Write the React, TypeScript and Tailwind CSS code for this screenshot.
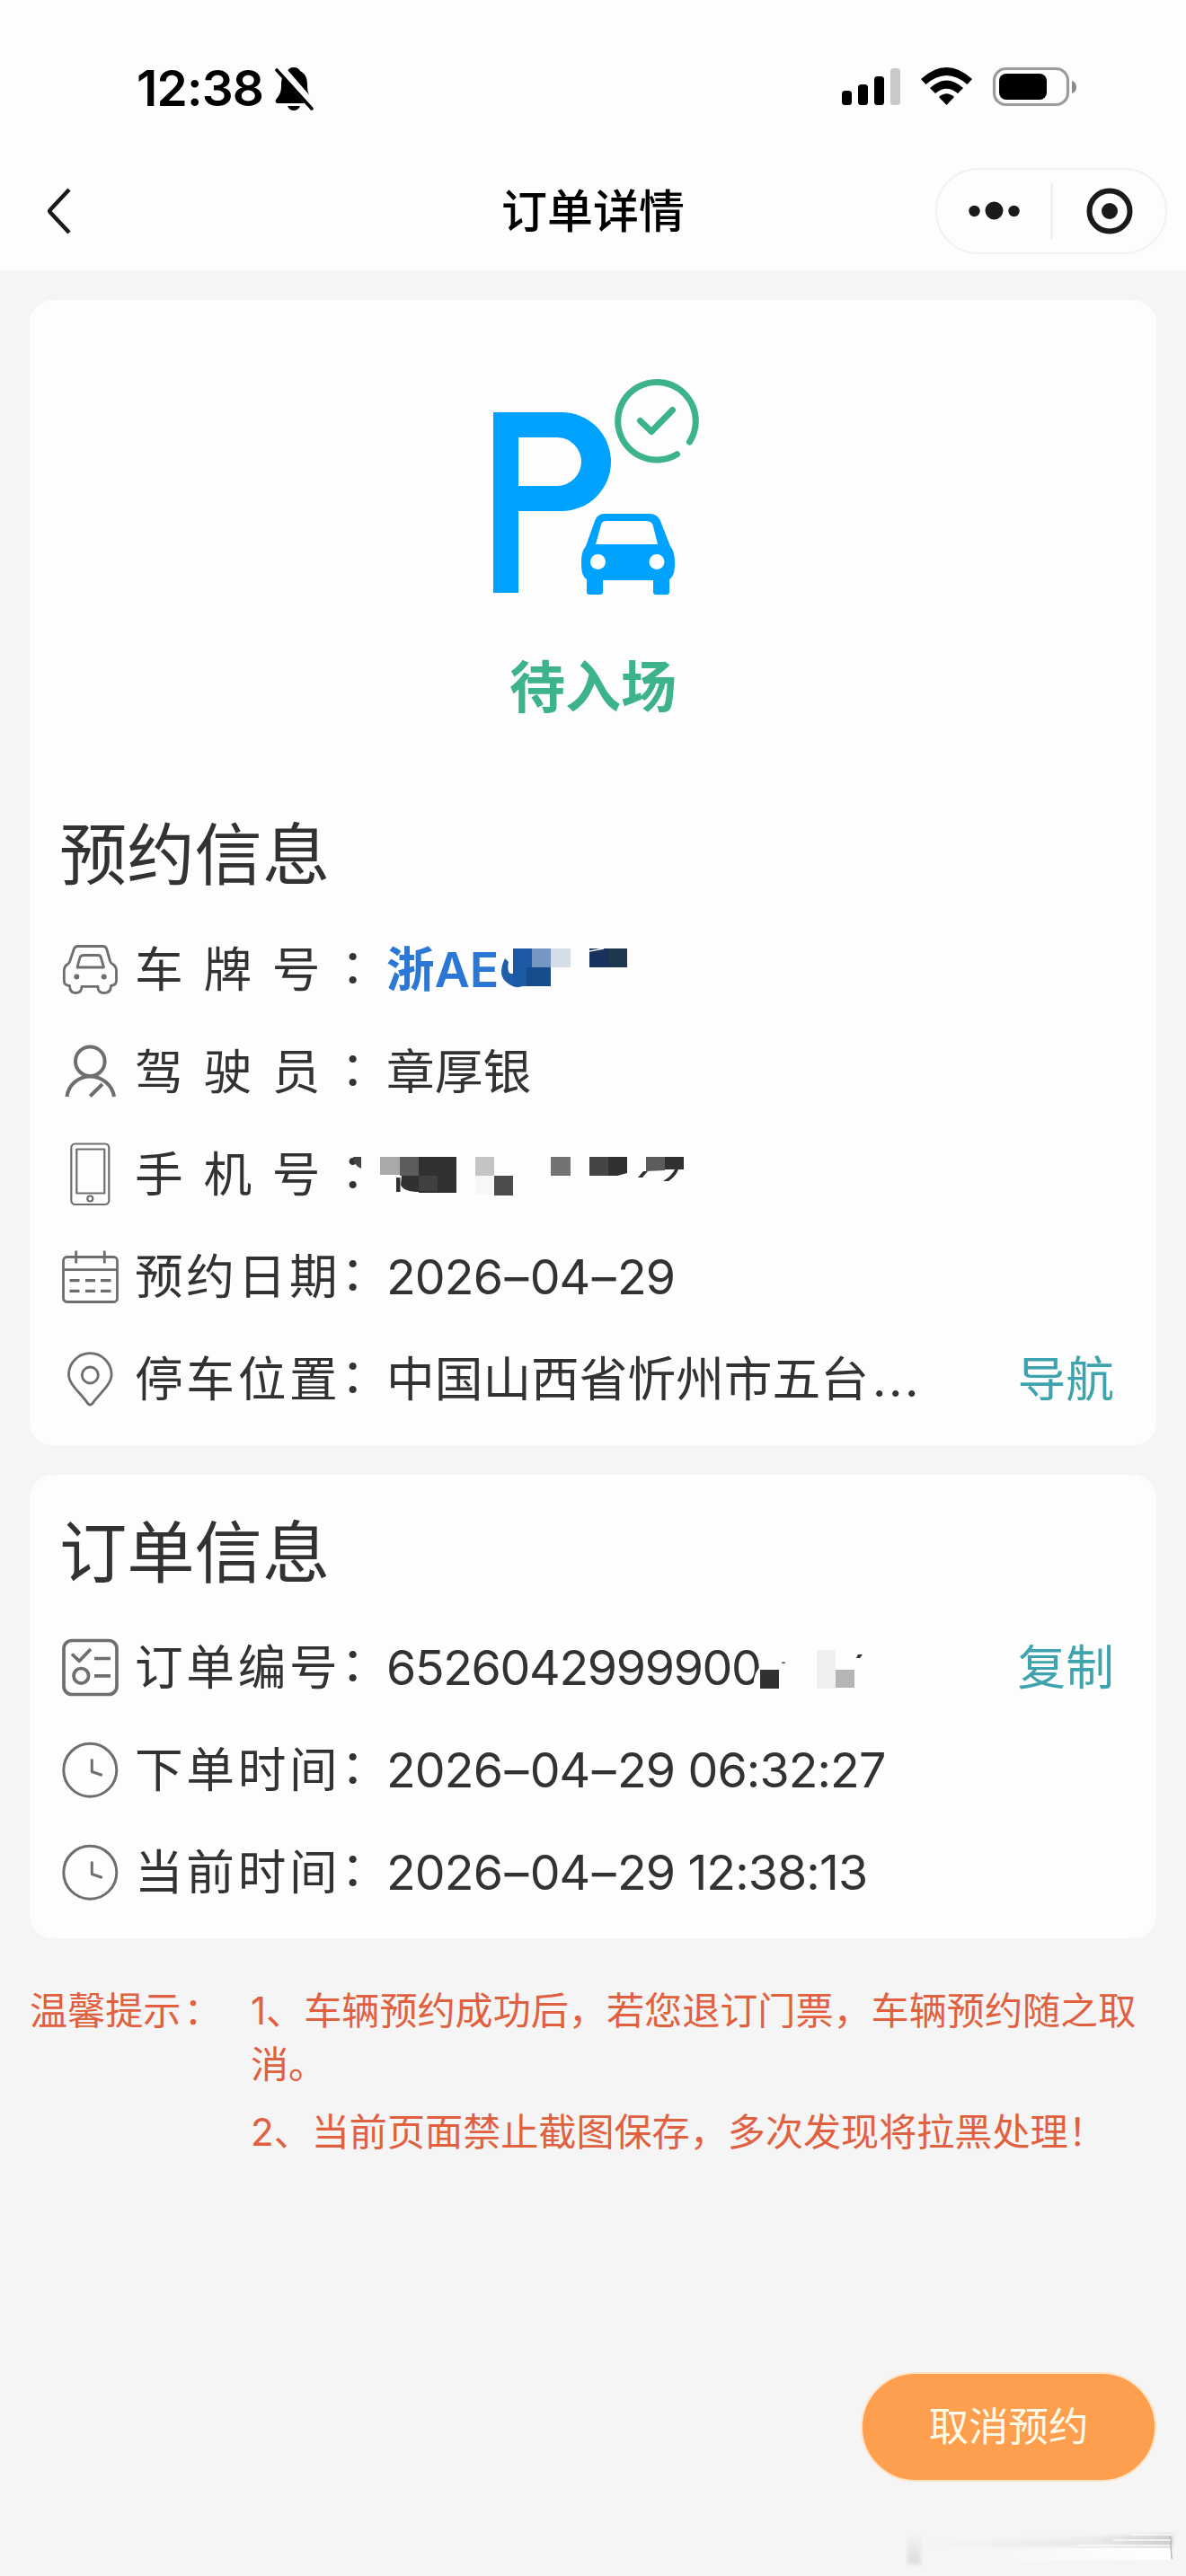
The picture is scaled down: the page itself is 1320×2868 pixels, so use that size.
import type { ReactNode } from "react";

type RowProps = {
  icon: ReactNode;
  label: string;
  action?: string;
  children: ReactNode;
};

export default function App() {
  return (
    <div className="flex h-[2868px] w-[1320px] flex-col overflow-hidden bg-[#f5f5f5] font-['Inter','Noto_Sans_CJK_SC',sans-serif] text-[#323232]">
      <header className="h-[301px] shrink-0 bg-[#fdfdfd] text-black">
        <StatusBar />
        <NavBar />
      </header>

      <main className="flex flex-1 flex-col px-[33px] pt-[33px]">
        <section className="h-[1275px] shrink-0 rounded-[26px] bg-[#fdfdfd]">
          <div className="flex h-[548px] flex-col items-center pt-[82px]">
            <ParkingLogo />
            <p className="mt-[58px] text-[62px] leading-[88px] font-bold text-[#3cb38a]">待入场</p>
          </div>
          <h2 className="flex h-[141px] items-center pl-[33px] text-[75.3px] font-normal">
            预约信息
          </h2>
          <Row icon={<CarIcon />} label="车牌号">
            <span className="font-semibold text-[#2b77d6]">浙AE</span>
            <PlateMask />
          </Row>
          <Row icon={<DriverIcon />} label="驾驶员">
            章厚银
          </Row>
          <Row icon={<PhoneIcon />} label="手机号">
            <PhoneMask />
          </Row>
          <Row icon={<CalendarIcon />} label="预约日期">
            <DateText value="2026–04–29" />
          </Row>
          <Row icon={<PinIcon />} label="停车位置" action="导航">
            中国山西省忻州市五台<span className="ml-1 tracking-[2.6px]">...</span>
          </Row>
        </section>

        <section className="mt-[33px] h-[516px] shrink-0 rounded-[26px] bg-[#fdfdfd] pt-4">
          <h2 className="flex h-[142px] items-center pl-[33px] text-[75.3px] font-normal">
            订单信息
          </h2>
          <Row icon={<OrderIcon />} label="订单编号" action="复制">
            <span className="tracking-[-1.35px]">6526042999900</span>
            <OrderMask />
          </Row>
          <Row icon={<ClockIcon />} label="下单时间">
            <DateText value="2026–04–29 06:32:27" />
          </Row>
          <Row icon={<ClockIcon />} label="当前时间">
            <DateText value="2026–04–29 12:38:13" />
          </Row>
        </section>

        <section className="mt-[51px] flex text-[42.1px] leading-[60px] text-[#e0603f]">
          <p className="w-[246px] shrink-0">
            温馨提示<span className="ml-[3px]">：</span>
          </p>
          <div className="flex-1 space-y-[15px]">
            <p>1、车辆预约成功后，若您退订门票，车辆预约随之取消。</p>
            <p>2、当前页面禁止截图保存，多次发现将拉黑处理！</p>
          </div>
        </section>

        <footer className="mt-auto flex h-[227px] flex-col items-end">
          <button className="h-[122px] w-[329px] rounded-full border-2 border-[#ffe3c4] bg-[#fd9f4f] text-[44.4px] text-[#fffbea]">
            取消预约
          </button>
          <Smudge />
        </footer>
      </main>
    </div>
  );
}

function StatusBar() {
  return (
    <div className="flex h-[187px] items-start justify-between pt-[65px] pr-[120px] pl-[152px]">
      <div className="flex items-center">
        <span className="w-[153px] text-[55px] leading-[66px] font-semibold tracking-[-0.8px]">12:38</span>
        <svg className="h-[50px] w-[46px]" viewBox="0 0 46 50">
          <path
            d="M22 2c4 0 6 2 7 4 6 3 8 8 8 15 0 9 2 13 6 18 1 2 0 3-2 3H4c-2 0-3-2-2-4 4-5 6-8 6-16 0-8 2-13 7-16 1-2 3-4 7-4z"
            fill="#000"
          />
          <path d="M15 45h14c-1 3-4 5-7 5s-6-2-7-5z" fill="#000" />
          <path d="M5 1l40 46" stroke="#fdfdfd" strokeWidth="10" />
          <path d="M3 5l39 43" stroke="#000" strokeWidth="3.6" strokeLinecap="round" />
        </svg>
      </div>
      <svg className="mt-[9px] h-[46px] w-[265px]" viewBox="935 74 265 46">
        <rect x="937" y="101" width="11" height="16" rx="3.5" />
        <rect x="955" y="94" width="11" height="23" rx="3.5" />
        <rect x="973" y="85" width="11" height="32" rx="3.5" />
        <rect x="991" y="76" width="11" height="41" rx="3.5" fill="#c9c9c9" />
        <path d="M1025 88q28.500-26 57 0l-5.500 6q-23-20-46 0z" />
        <path d="M1035 98q18.500-17 37 0l-6 6q-12.500-10.500-25 0z" />
        <path d="M1045 108q8.500-7.500 17 0l-8.500 9z" />
        <rect x="1106.500" y="76.500" width="82" height="40" rx="13" fill="none" stroke="#9b9b9b" strokeWidth="3.200" />
        <rect x="1112" y="82" width="53" height="29" rx="8" />
        <path d="M1193 90c3.500 1 5 4 5 7s-1.500 6-5 7z" fill="#8b8b8b" />
      </svg>
    </div>
  );
}

function NavBar() {
  return (
    <nav className="grid h-24 grid-cols-[1fr_auto_1fr] items-center pr-[21px] pl-[50px]">
      <svg className="h-[54px] w-8" viewBox="0 0 32 54" fill="none" stroke="#1a1a1a" strokeWidth="4.500">
        <path d="M27 3L6 25.500q-1.500 1.500 0 3L27 51" />
      </svg>
      <h1 className="-ml-[29px] pt-[3px] text-[51px] font-medium">订单详情</h1>
      <div className="flex h-24 w-[258px] items-center justify-self-end rounded-full border-2 border-[#f1f1f1]">
        <svg className="h-16 w-full" viewBox="0 0 254 64" fill="#1a1a1a">
          <circle cx="41.500" cy="32" r="6.200" />
          <circle cx="63.500" cy="31.500" r="10" />
          <circle cx="85.500" cy="32" r="6.200" />
          <path d="M127.500 1v62" stroke="#e6e6e6" strokeWidth="1.500" />
          <circle cx="192" cy="32" r="22.500" fill="none" stroke="#1a1a1a" strokeWidth="6" />
          <circle cx="192" cy="32" r="9" />
        </svg>
      </div>
    </nav>
  );
}

function Row({ icon, label, action, children }: RowProps) {
  return (
    <div className="flex h-[114px] items-center pr-[47px] pl-[35px] text-[53.7px] whitespace-nowrap">
      {icon}
      <div className="ml-[18px] flex w-[279px] items-center justify-between">
        {label.split("").map((c, i) => (
          <span key={i}>{c}</span>
        ))}
        <span className="-mr-1 -ml-1 pb-[7px] pl-1">：</span>
      </div>
      <div className="ml-[1px] flex flex-1 items-center">{children}</div>
      {action && <a className="text-[#3fa3ae]">{action}</a>}
    </div>
  );
}

function DateText({ value }: { value: string }) {
  return (
    <span className="tracking-[-0.9px] whitespace-pre">
      {value.split("").map((c, i) =>
        c === "–" ? (
          <span key={i} className="mx-[2.3px]">
            {c}
          </span>
        ) : (
          c
        ),
      )}
    </span>
  );
}

function ParkingLogo() {
  return (
    <svg className="h-[248px] w-[240px]" viewBox="540 416 240 248" fill="none">
      <path
        d="M549 459h76a55 55 0 0 1 0 110h-48v91h-28zM577 487v54h43a27 27 0 0 0 0-54z"
        fill="#00a2ff"
        fillRule="evenodd"
      />
      <path
        d="M673 572h50c6 0 10 3 12 8l11 28c4 5 5 11 5 19 0 8-1 15-6 18v14q0 3-3 3h-12q-3 0-3-3v-13h-56v13q0 3-3 3h-12q-3 0-3-3v-14c-5-3-6-10-6-18 0-8 1-14 5-19l10-28c2-5 5-8 11-8zM675 580q-5 0-6 4l-6 22h69l-5-20q-1-6-8-6z"
        fill="#00a2ff"
        fillRule="evenodd"
      />
      <circle cx="665.500" cy="625.500" r="8.500" fill="#fdfdfd" />
      <circle cx="731" cy="625.500" r="8.500" fill="#fdfdfd" />
      <g stroke="#3cb38a" strokeWidth="7" strokeLinecap="round" strokeLinejoin="round">
        <path d="M767.500 492A43.300 43.300 0 1 0 753.500 505.700" />
        <path d="M712.500 468.500l12.500 12 23.500-24" />
      </g>
    </svg>
  );
}

function RowIcon({ stroke = 2.8, children }: { stroke?: number; children: ReactNode }) {
  return (
    <svg
      className="h-[72px] w-16 shrink-0"
      viewBox="0 0 64 72"
      fill="none"
      stroke="#6e6e6e"
      strokeWidth={stroke}
      strokeLinejoin="round"
    >
      {children}
    </svg>
  );
}

function CarIcon() {
  return (
    <RowIcon>
      <path d="M19 9.500h27.500q3.500 0 4.500 4l3.500 12.500q.5 2 3 3.500q4 2.500 4 7V48q0 4.500-6 5.500q0 8-7.500 8t-7-7.200H23q0 7.200-6.700 7.200T9.500 53.500Q3.300 53 3.300 48V36.500q0-4.500 4-7q2-1.500 2.500-3.500L14 13.500q1-4 5-4z" />
      <path d="M25.500 19.500h15.500q3 0 3.500 3l3 10.500H18l2.800-10.500q.8-3 4.700-3z" />
      <circle cx="17.300" cy="43.500" r="3" fill="#6e6e6e" stroke="none" />
      <circle cx="47.700" cy="43.500" r="3" fill="#6e6e6e" stroke="none" />
    </RowIcon>
  );
}

function DriverIcon() {
  return (
    <RowIcon stroke={4}>
      <circle cx="32.300" cy="23.700" r="16.300" />
      <path d="M6.500 63C8 50 19 40.500 32.300 40.500S57 50 59 63M32.300 62.500L46 49" />
    </RowIcon>
  );
}

function PhoneIcon() {
  return (
    <RowIcon stroke={2.2}>
      <rect x="11.300" y="1.500" width="42" height="67.500" rx="4.500" />
      <rect x="17.300" y="7.500" width="31" height="49" />
      <circle cx="32.300" cy="62.500" r="3" />
    </RowIcon>
  );
}

function CalendarIcon() {
  return (
    <RowIcon>
      <rect x="2.500" y="13.500" width="60" height="50" rx="4" />
      <path d="M2.500 27.700h60M16.700 6.500v14M48.300 6.500v14" />
      <path d="M9.500 39.700h11M27 39.700h11M44 39.700h11.500M9.500 51.300h11M27 51.300h11M44 51.300h11.500" strokeWidth="3.2" />
    </RowIcon>
  );
}

function PinIcon() {
  return (
    <RowIcon>
      <path d="M35 62.500q-2.700 3-5.400 0C24 53 8.500 42 8.500 30.500a23.800 23.800 0 0 1 47.600 0C56.100 42 41 53 35 62.500z" />
      <circle cx="32.300" cy="31" r="9" />
    </RowIcon>
  );
}

function OrderIcon() {
  return (
    <RowIcon stroke={3.7}>
      <rect x="3" y="5.500" width="59" height="60" rx="9" />
      <path d="M12 20.500l8.300 7.800L33 15M37 25.500h18M37 44.800h18" />
      <circle cx="22.300" cy="44.800" r="8.300" />
    </RowIcon>
  );
}

function ClockIcon() {
  return (
    <RowIcon stroke={3}>
      <circle cx="32.300" cy="35.700" r="29.500" />
      <path d="M34.300 23.500v14l11.500 4" />
    </RowIcon>
  );
}

// Pixelated blocks that hide the private part of each value
function PlateMask() {
  return (
    <svg className="ml-[2px] h-[60px] w-[150px]" viewBox="556 1050 150 60">
      <path d="M561 1067q-8 17 0 25q12 12 24 4l6-5v-7h-24q-4-3-2-13z" fill="#1f5ca9" />
      <rect x="570" y="1056" width="21" height="42" fill="#1c5aa6" />
      <rect x="591" y="1056" width="21" height="21" fill="#7697c2" />
      <rect x="612" y="1056" width="22" height="21" fill="#d4dde6" />
      <rect x="585" y="1077" width="27" height="21" fill="#184d8d" />
      <rect x="655" y="1056" width="22" height="21" fill="#18315f" />
      <rect x="677" y="1056" width="20" height="21" fill="#1e374f" />
      <path d="M655 1059l16-3" stroke="#fdfdfd" strokeWidth="1.500" />
    </svg>
  );
}

function PhoneMask() {
  return (
    <svg className="-ml-[39px] h-[60px] w-[380px]" viewBox="390 1278 380 60" fill="#2f3031">
      <path d="M392 1288h9v13q-7-2-9-13z" fill="#444" />
      <rect x="422" y="1288" width="22" height="20" fill="#a9a9a9" />
      <rect x="444" y="1288" width="21" height="21" fill="#5c5c5c" />
      <rect x="465" y="1288" width="42" height="40" />
      <rect x="440" y="1311" width="4.500" height="16" />
      <path d="M446 1309h20v18q-18 0-21-8z" />
      <rect x="465" y="1309" width="21" height="17" fill="#3f4040" />
      <rect x="528" y="1288" width="21" height="21" fill="#c4c4c4" />
      <rect x="528" y="1309" width="21" height="21" fill="#f7f7f7" />
      <rect x="549" y="1309" width="21" height="22" fill="#4c4c4c" />
      <rect x="612" y="1288" width="22" height="21" fill="#737373" />
      <rect x="655" y="1288" width="21" height="21" fill="#444545" />
      <path d="M676 1288h21v18l-11 3h-10z" />
      <path d="M718 1288h21v15l-21 1z" fill="#5c5c5c" />
      <rect x="739" y="1288" width="21" height="14" />
      <path d="M709 1311l6-7h5l-6 7zM737 1315q10-6 13-13h4q-3 8-11 13z" />
    </svg>
  );
}

function OrderMask() {
  return (
    <svg className="-ml-2 h-[60px] w-[124px]" viewBox="838 1827 124 60">
      <path d="M845 1856q-5 4-7 14v14h10v-28z" fill="#fdfdfd" />
      <rect x="845" y="1859" width="21" height="21" fill="#303132" />
      <rect x="869" y="1850.500" width="4" height="1.500" fill="#555" />
      <rect x="908" y="1837" width="21" height="43" fill="#efefef" />
      <rect x="929" y="1859" width="21" height="20" fill="#b5b5b5" />
      <path d="M952 1846l2-4h5l-3 4z" fill="#333" />
    </svg>
  );
}

function Smudge() {
  return (
    <svg className="mt-[54px] -mr-6 h-[44px] w-[316px]" viewBox="996 2817 316 44">
      <defs>
        <linearGradient id="blot" x2="0" y2="1">
          <stop offset="0" stopColor="#f3f3f3" />
          <stop offset="1" stopColor="#dcdcdc" />
        </linearGradient>
        <linearGradient id="streak">
          <stop offset="0" stopColor="#f4f4f4" />
          <stop offset=".7" stopColor="#e9e9e9" />
          <stop offset="1" stopColor="#cccccc" />
        </linearGradient>
        <linearGradient id="shine">
          <stop offset="0" stopColor="#f5f5f5" />
          <stop offset="1" stopColor="#ffffff" />
        </linearGradient>
        <filter id="soft">
          <feGaussianBlur stdDeviation="2" />
        </filter>
      </defs>
      <rect x="1011" y="2822" width="15" height="33" fill="url(#blot)" filter="url(#soft)" />
      <path d="M1030 2832l276-11v15h-276z" fill="url(#streak)" filter="url(#soft)" />
      <rect x="1090" y="2837" width="215" height="13" fill="url(#shine)" />
      <path d="M1260 2822h46M1240 2828h66M1200 2834h104" stroke="#fafafa" strokeWidth="1.500" />
      <path d="M1302 2824q4 2 2 8l1 17" fill="none" stroke="#b8b8b8" strokeWidth="1.500" />
    </svg>
  );
}
